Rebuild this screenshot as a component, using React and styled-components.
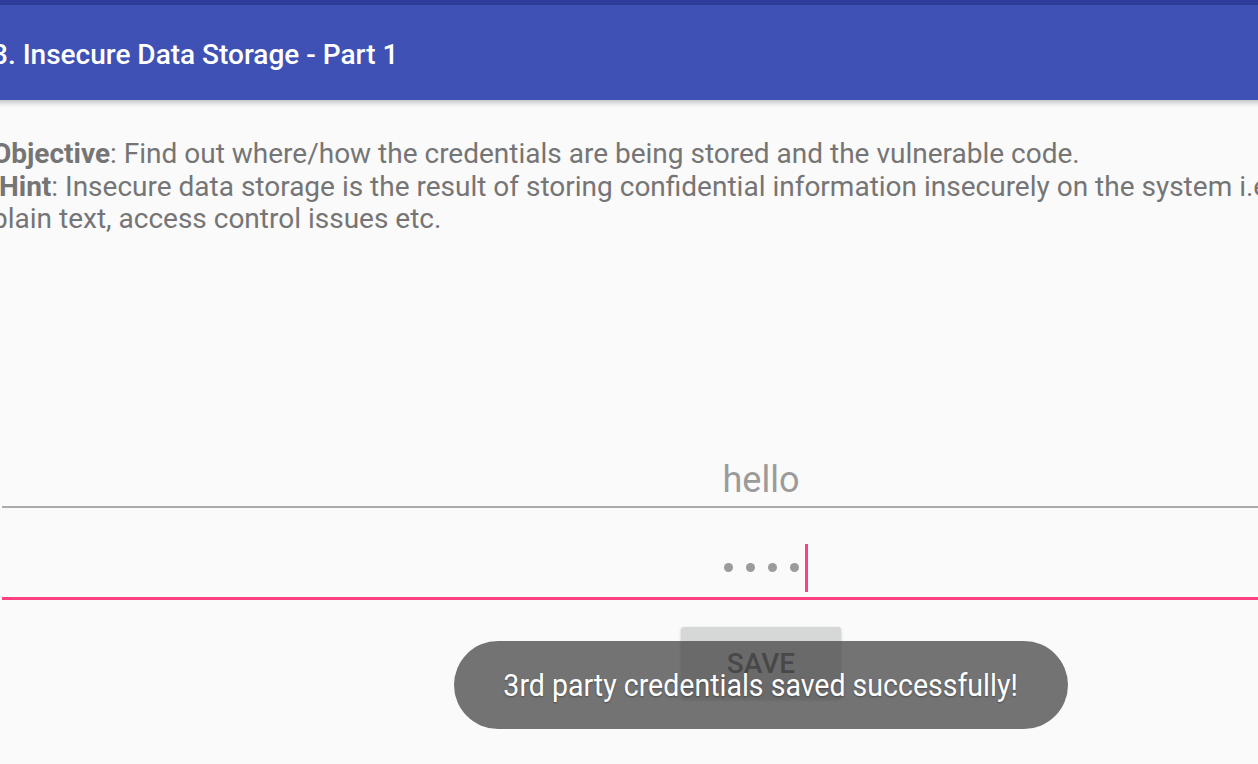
import React from "react";
import styled, { createGlobalStyle } from "styled-components";

const Global = createGlobalStyle`
  html, body {
    margin: 0;
    padding: 0;
    background: #fafafa;
    overflow: hidden;
  }
  body {
    font-family: Roboto, "Noto Sans", "Liberation Sans", sans-serif;
  }
  #root {
    width: 1258px;
    height: 764px;
    overflow: hidden;
    position: relative;
  }
`;

const Screen = styled.div`
  width: 1570px;
  height: 764px;
  margin-left: -24px;
  display: flex;
  flex-direction: column;
  background: #fafafa;
  position: relative;
`;

const StatusBar = styled.div`
  height: 5px;
  background: #303f9f;
`;

const Toolbar = styled.header`
  height: 95px;
  box-sizing: border-box;
  padding: 3px 16px 0;
  background: #3f51b5;
  display: flex;
  align-items: center;
  position: relative;
  z-index: 2;
  box-shadow: 0 2px 6px rgba(0, 0, 0, 0.28);
`;

const Title = styled.h1`
  margin: 0;
  color: #ffffff;
  font-family: Roboto, "Noto Sans", sans-serif;
  font-size: 28px;
  font-weight: 500;
  white-space: nowrap;
`;

const Content = styled.main`
  display: flex;
  flex-direction: column;
  padding: 38px 16px 0;
`;

const Description = styled.p`
  margin: 0;
  font-size: 28px;
  line-height: 32.5px;
  color: #757575;
  white-space: pre;
`;

const Strong = styled.b`
  font-weight: 700;
`;

const Form = styled.section`
  display: flex;
  flex-direction: column;
  margin: 204px 10px 0;
`;

const Field = styled.div`
  display: flex;
  justify-content: center;
  align-items: ${(p) => (p.$center ? "center" : "flex-end")};
  height: ${(p) => p.$height}px;
  padding-top: ${(p) => p.$padTop || 0}px;
  padding-bottom: ${(p) => p.$padBottom}px;
  border-bottom: ${(p) => p.$line}px solid ${(p) => p.$color};
`;

const FieldText = styled.span`
  font-size: 36px;
  line-height: 1;
  color: #9b9b9b;
`;

const Dots = styled.div`
  display: flex;
  gap: 13px;
  position: relative;
`;

const Dot = styled.span`
  width: 9px;
  height: 9px;
  border-radius: 50%;
  background: #9b9b9b;
`;

const Caret = styled.span`
  position: absolute;
  left: calc(100% + 6px);
  top: 50%;
  width: 3px;
  height: 48px;
  margin-top: -24px;
  background: #ff4081;
`;

const SaveButton = styled.button`
  align-self: center;
  margin-top: 27px;
  width: 160px;
  height: 72px;
  border: none;
  border-radius: 3px;
  background: #d6d7d7;
  box-shadow: 0 1px 3px rgba(0, 0, 0, 0.2);
  color: #505050;
  font-family: Roboto, "Noto Sans", sans-serif;
  font-size: 28px;
  font-weight: 500;
  padding: 2px 0 0;
`;

const Toast = styled.div`
  position: absolute;
  left: 478px;
  top: 641px;
  width: 614px;
  height: 88px;
  border-radius: 44px;
  background: rgba(70, 70, 70, 0.75);
  display: flex;
  align-items: center;
  justify-content: center;
  z-index: 5;
`;

const ToastText = styled.span`
  display: inline-block;
  color: #ffffff;
  font-family: Roboto, "Noto Sans", sans-serif;
  font-size: 31px;
  white-space: nowrap;
  transform: scaleX(0.92);
  text-shadow: 0 1px 2px rgba(0, 0, 0, 0.35);
`;

export default function App() {
  return (
    <>
      <Global />
      <Screen>
        <StatusBar />
        <Toolbar>
          <Title>3. Insecure Data Storage - Part 1</Title>
        </Toolbar>
        <Content>
          <Description>
            <Strong>Objective</Strong>: Find out where/how the credentials are being stored and the vulnerable code.
            {"\n "}
            <Strong>Hint</Strong>: Insecure data storage is the result of storing confidential information insecurely on the system i.e.
            {"\n"}plain text, access control issues etc.
          </Description>
          <Form>
            <Field $height={58} $padBottom={8} $line={2} $color="#ababab">
              <FieldText>hello</FieldText>
            </Field>
            <Field $center $height={48} $padTop={36} $padBottom={5} $line={3} $color="#ff4081">
              <Dots>
                <Dot />
                <Dot />
                <Dot />
                <Dot />
                <Caret />
              </Dots>
            </Field>
            <SaveButton>SAVE</SaveButton>
          </Form>
        </Content>
        <Toast>
          <ToastText>3rd party credentials saved successfully!</ToastText>
        </Toast>
      </Screen>
    </>
  );
}
